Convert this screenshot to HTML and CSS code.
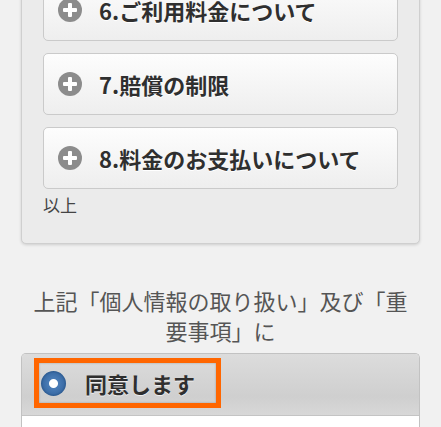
FILE: index.html
```html
<!DOCTYPE html>
<html lang="ja">
<head>
    <meta charset="UTF-8">
    <meta name="viewport" content="width=device-width, initial-scale=1.0">
    <title>重要事項</title>
    <link rel="stylesheet" href="styles.css">
</head>
<body>
    <div class="page">
        <div class="panel">
            <div class="collapsible">
                <span class="plus"></span>
                <span class="label">6.ご利用料金について</span>
            </div>
            <div class="collapsible">
                <span class="plus"></span>
                <span class="label">7.賠償の制限</span>
            </div>
            <div class="collapsible">
                <span class="plus"></span>
                <span class="label">8.料金のお支払いについて</span>
            </div>
            <p class="note">以上</p>
        </div>

        <p class="agree-text">上記「個人情報の取り扱い」及び「重要事項」に</p>

        <div class="choices">
            <div class="choice-head">
                <label class="choice">
                    <span class="radio"></span>
                    <span class="choice-label">同意します</span>
                </label>
            </div>
            <div class="choice-body"></div>
        </div>
    </div>
</body>
</html>
```

FILE: styles.css
```css
body {
    margin: 0;
    background-color: #f1f1f1;
    font-family: "Noto Sans CJK JP", "Liberation Sans", sans-serif;
    color: #333;
}
.page {
    padding: 0 21px;
    margin-top: -46px;
}
.panel {
    background-color: #ebebeb;
    border: 1px solid #cfcfcf;
    border-radius: 5px;
    box-shadow: 0 1px 3px rgba(0, 0, 0, 0.15);
    padding: 24px 21px 26px;
}
.collapsible {
    display: flex;
    align-items: center;
    height: 60px;
    margin-bottom: 12px;
    padding-left: 14px;
    background: linear-gradient(#fdfdfd, #eeeeee);
    border: 1px solid #cacaca;
    border-radius: 5px;
}
.collapsible:last-of-type {
    margin-bottom: 0;
}
.plus {
    position: relative;
    width: 24px;
    height: 24px;
    border-radius: 50%;
    background-color: #8c8c8c;
    margin-right: 17px;
    flex-shrink: 0;
}
.plus:before, .plus:after {
    content: "";
    position: absolute;
    background-color: #fff;
    border-radius: 1px;
}
.plus:before {
    left: 5px;
    top: 10px;
    width: 14px;
    height: 4px;
}
.plus:after {
    left: 10px;
    top: 5px;
    width: 4px;
    height: 14px;
}
.label {
    font-size: 22px;
    font-weight: bold;
    color: #2f2f2f;
    text-shadow: 0 1px 0 #fff;
}
.note {
    margin: 4px 0 0;
    font-size: 17px;
    line-height: 24px;
    color: #444;
}
.agree-text {
    margin: 41px 0 8px;
    padding: 0 10px;
    font-size: 22px;
    line-height: 30px;
    text-align: center;
    color: #555;
}
.choices {
    border: 1px solid #c2c2c2;
    border-bottom: none;
    border-radius: 5px 5px 0 0;
    overflow: hidden;
}
.choice-head {
    padding: 4px 12px 7px;
    background: linear-gradient(#dcdcdc, #cfcfcf 70%, #d8d8d8);
    border-bottom: 1px solid #c4c4c4;
}
.choice {
    display: inline-flex;
    align-items: center;
    width: 175px;
    height: 40px;
    padding-left: 2px;
    border: 5px solid #ff6600;
    box-shadow: inset 0 0 2px rgba(0, 0, 0, 0.3);
}
.radio {
    width: 25px;
    height: 25px;
    border-radius: 50%;
    background: radial-gradient(circle, #fff 0, #fff 4px, #4a7cb6 5px, #3d6ea8 10px, #2c5a90 12.5px);
    margin-right: 19px;
}
.choice-label {
    font-size: 22px;
    font-weight: bold;
    color: #2f2f2f;
    text-shadow: 0 1px 0 #eee;
}
.choice-body {
    height: 40px;
    background-color: #fff;
}
```
